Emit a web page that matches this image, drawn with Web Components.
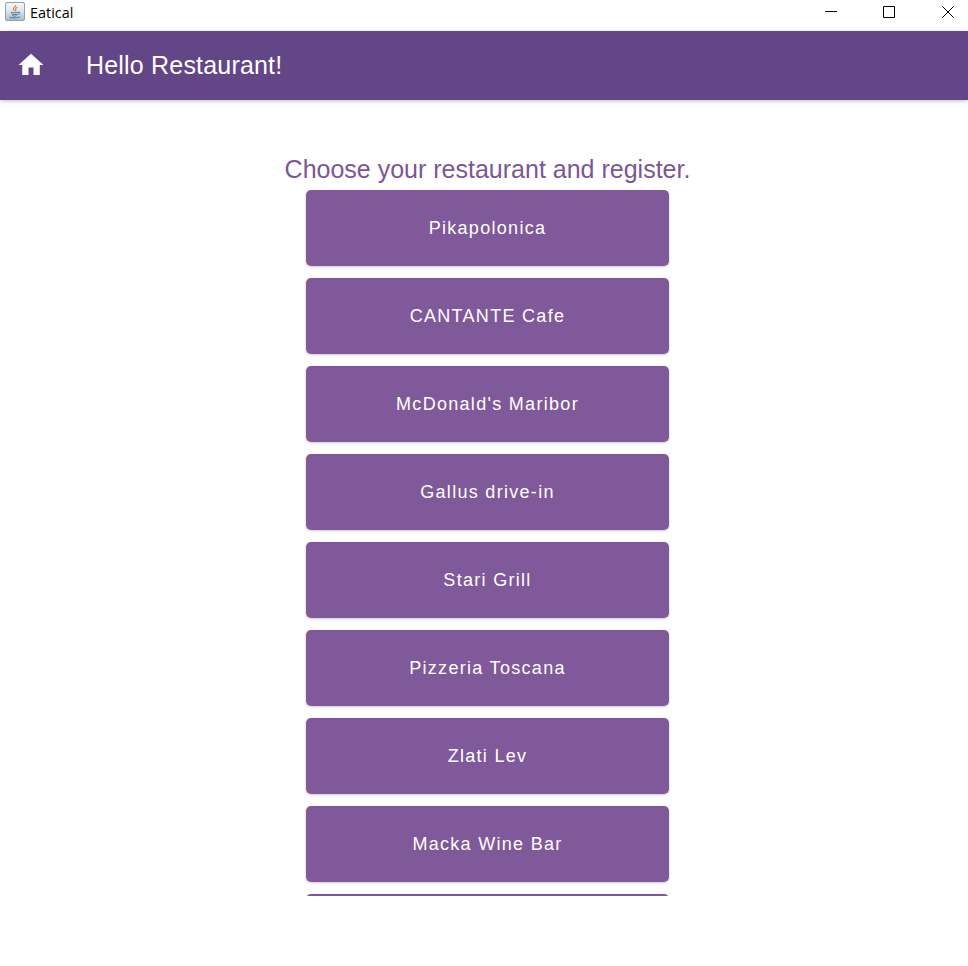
<!DOCTYPE html>
<html lang="en">
<head>
<meta charset="utf-8">
<title>Eatical</title>
<style>
  html, body { margin: 0; height: 100%; background: #fff; }
  body { font-family: "Liberation Sans", Arial, sans-serif; overflow: hidden; }
</style>
</head>
<body>
<eatical-window></eatical-window>
<script>
  const define = (name, html) => {
    const template = document.createElement('template');
    template.innerHTML = html;
    customElements.define(name, class extends HTMLElement {
      constructor() {
        super();
        this.attachShadow({ mode: 'open' }).append(template.content.cloneNode(true));
      }
    });
  };

  define('java-icon', `
    <style>:host { display: block; width: 20px; height: 20px; } svg { display: block; }</style>
    <svg width="20" height="20" viewBox="0 0 20 20" fill="none">
      <defs><linearGradient id="g" x1="0" y1="0" x2="0" y2="1">
        <stop offset="0" stop-color="#f6f8fa"/><stop offset=".45" stop-color="#dfe7ee"/><stop offset="1" stop-color="#a9bccd"/>
      </linearGradient></defs>
      <rect x=".5" y=".5" width="19" height="18" rx="1.5" fill="url(#g)" stroke="#8fa0b0"/>
      <path d="M10.600 3c1 1.800-2.800 2.600-2.200 4.300.2.700 1 1.100 1.100 2M12.500 5.300c-1.700.7-2.500 1.500-1.700 2.600.4.600.1 1.100-.4 1.500" stroke="#e08a4a" stroke-width="1.200"/>
      <path d="M5.800 10.300c1.500.7 5.500.7 7.200 0M6.500 12.100c1.400.6 4.500.6 6 0M7.300 13.700c1.200.5 3.500.5 4.600 0M13 10.200c2.500-.6 2.500 1.700.2 2.200M4.500 14.900c0 1.400 9 1.400 10.500-.2" stroke="#4e789d" stroke-width="1"/>
    </svg>`);

  define('window-titlebar', `
    <style>
      :host { display: flex; align-items: flex-start; height: 31px; background: #fff; color: #000; }
      java-icon { margin: 2px 0 0 5px; }
      .title { margin-left: 5px; font: 15px/24px "Open Sans", "Noto Sans", sans-serif; flex: 1; }
      .title span { display: inline-block; transform: scaleX(.96); transform-origin: left; }
      svg { display: block; }
    </style>
    <java-icon></java-icon>
    <div class="title"><span><slot></slot></span></div>
    <svg width="168" height="31" viewBox="0 0 168 31" fill="none" stroke="#000" stroke-width="1">
      <path d="M25 11.500H37M83.500 6.500H94.500V17.500H83.500ZM142.300 6.300L153.700 17.700M153.700 6.300L142.300 17.700"/>
    </svg>`);

  define('home-icon', `
    <style>:host { display: block; width: 30px; height: 30px; } svg { display: block; }</style>
    <svg width="30" height="30" viewBox="0 0 24 24" fill="#fff"><path d="M10 20v-6h4v6h5v-8h3L12 3 2 12h3v8z"/></svg>`);

  define('app-bar', `
    <style>
      :host { display: flex; align-items: center; height: 69px; padding: 0 0 1px 16px; gap: 40px; position: relative; z-index: 1;
        background: #634687; color: #fff; box-shadow: 0 1px 4px rgba(0,0,0,.26); box-sizing: border-box; }
      .title { font-size: 25px; letter-spacing: .19px; line-height: 30px; margin-bottom: 1px; white-space: nowrap; }
    </style>
    <home-icon></home-icon>
    <div class="title"><slot></slot></div>`);

  define('restaurant-button', `
    <style>
      :host { display: block; flex: none; height: 76px; }
      button { display: block; width: 100%; height: 100%; border: 0; padding: 0; border-radius: 5px; background: #7f5999; color: #fff;
        font: 18px/24px "Liberation Sans", Arial, sans-serif; letter-spacing: 1.3px;
        box-shadow: 0 1px 3px rgba(0,0,0,.2); }
    </style>
    <button><slot></slot></button>`);

  define('restaurant-list', `
    <style>
      :host { display: flex; flex-direction: column; gap: 12px; width: 363px; height: 706px; padding: 0 6px; overflow: hidden; }
    </style>
    <slot></slot>`);

  define('register-view', `
    <style>
      :host { display: flex; flex-direction: column; align-items: center; padding: 54px 0 0 7px; }
      h1 { margin: 0; height: 36px; font-size: 25px; font-weight: 400; line-height: 30px; color: #7b5796; white-space: nowrap; }
    </style>
    <h1>Choose your restaurant and register.</h1>
    <restaurant-list>
      <restaurant-button>Pikapolonica</restaurant-button>
      <restaurant-button>CANTANTE Cafe</restaurant-button>
      <restaurant-button>McDonald's Maribor</restaurant-button>
      <restaurant-button>Gallus drive-in</restaurant-button>
      <restaurant-button>Stari Grill</restaurant-button>
      <restaurant-button>Pizzeria Toscana</restaurant-button>
      <restaurant-button>Zlati Lev</restaurant-button>
      <restaurant-button>Macka Wine Bar</restaurant-button>
      <restaurant-button></restaurant-button>
    </restaurant-list>`);

  define('eatical-window', `
    <style>:host { display: block; height: 966px; background: #fff; overflow: hidden; }</style>
    <window-titlebar>Eatical</window-titlebar>
    <app-bar>Hello Restaurant!</app-bar>
    <register-view></register-view>`);
</script>
</body>
</html>
